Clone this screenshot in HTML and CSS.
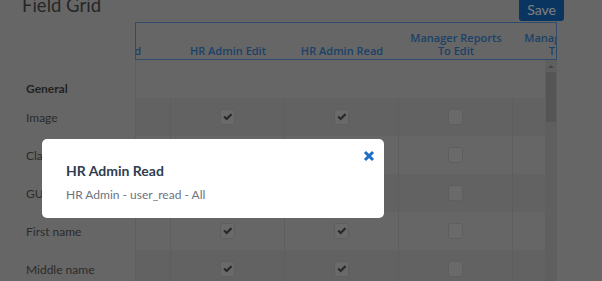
FILE: index.html
```html
<!DOCTYPE html>
<html>
<head>
<meta charset="utf-8">
<link rel="stylesheet" href="styles.css">
</head>
<body>
<div class="page">
  <div class="topbar">
    <h1 class="title">Field Grid</h1>
    <button class="save">Save</button>
  </div>
  <div class="grid">
    <div class="labels">
      <div class="label section">General</div>
      <div class="label">Image</div>
      <div class="label">Class</div>
      <div class="label">GUID</div>
      <div class="label">First name</div>
      <div class="label">Middle name</div>
    </div>
    <div class="pane">
      <div class="head">
        <div class="head-inner">
          <div class="hcell">User Read</div>
          <div class="hcell">HR Admin Edit</div>
          <div class="hcell">HR Admin Read</div>
          <div class="hcell">Manager Reports<br>To Edit</div>
          <div class="hcell">Manager Reports<br>To Read</div>
        </div>
      </div>
      <div class="body">
        <div class="rows">
          <div class="rows-inner">
            <div class="section-row"></div>
            <div class="row alt">
              <div class="cell"><span class="box"></span></div>
              <div class="cell"><span class="box"><svg viewBox="0 0 11 8"><path d="M0.4 4.3 L2.1 2.6 L4 4.5 L8.5 0 L10.2 1.7 L4 7.9 Z"/></svg></span></div>
              <div class="cell"><span class="box"><svg viewBox="0 0 11 8"><path d="M0.4 4.3 L2.1 2.6 L4 4.5 L8.5 0 L10.2 1.7 L4 7.9 Z"/></svg></span></div>
              <div class="cell"><span class="box"></span></div>
              <div class="cell"><span class="box"></span></div>
            </div>
            <div class="row">
              <div class="cell"><span class="box"></span></div>
              <div class="cell"><span class="box"><svg viewBox="0 0 11 8"><path d="M0.4 4.3 L2.1 2.6 L4 4.5 L8.5 0 L10.2 1.7 L4 7.9 Z"/></svg></span></div>
              <div class="cell"><span class="box"><svg viewBox="0 0 11 8"><path d="M0.4 4.3 L2.1 2.6 L4 4.5 L8.5 0 L10.2 1.7 L4 7.9 Z"/></svg></span></div>
              <div class="cell"><span class="box"></span></div>
              <div class="cell"><span class="box"></span></div>
            </div>
            <div class="row alt">
              <div class="cell"><span class="box"></span></div>
              <div class="cell"><span class="box"><svg viewBox="0 0 11 8"><path d="M0.4 4.3 L2.1 2.6 L4 4.5 L8.5 0 L10.2 1.7 L4 7.9 Z"/></svg></span></div>
              <div class="cell"><span class="box"><svg viewBox="0 0 11 8"><path d="M0.4 4.3 L2.1 2.6 L4 4.5 L8.5 0 L10.2 1.7 L4 7.9 Z"/></svg></span></div>
              <div class="cell"><span class="box"></span></div>
              <div class="cell"><span class="box"></span></div>
            </div>
            <div class="row">
              <div class="cell"><span class="box"></span></div>
              <div class="cell"><span class="box"><svg viewBox="0 0 11 8"><path d="M0.4 4.3 L2.1 2.6 L4 4.5 L8.5 0 L10.2 1.7 L4 7.9 Z"/></svg></span></div>
              <div class="cell"><span class="box"><svg viewBox="0 0 11 8"><path d="M0.4 4.3 L2.1 2.6 L4 4.5 L8.5 0 L10.2 1.7 L4 7.9 Z"/></svg></span></div>
              <div class="cell"><span class="box"></span></div>
              <div class="cell"><span class="box"></span></div>
            </div>
            <div class="row alt">
              <div class="cell"><span class="box"></span></div>
              <div class="cell"><span class="box"><svg viewBox="0 0 11 8"><path d="M0.4 4.3 L2.1 2.6 L4 4.5 L8.5 0 L10.2 1.7 L4 7.9 Z"/></svg></span></div>
              <div class="cell"><span class="box"><svg viewBox="0 0 11 8"><path d="M0.4 4.3 L2.1 2.6 L4 4.5 L8.5 0 L10.2 1.7 L4 7.9 Z"/></svg></span></div>
              <div class="cell"><span class="box"></span></div>
              <div class="cell"><span class="box"></span></div>
            </div>
          </div>
        </div>
        <div class="scrollbar">
          <div class="arrow"></div>
          <div class="thumb"></div>
        </div>
      </div>
    </div>
  </div>
</div>
<div class="overlay"></div>
<div class="modal">
  <button class="close" aria-label="Close"><svg viewBox="0 0 12 12"><path d="M2 2 L10 10 M10 2 L2 10"/></svg></button>
  <h2 class="modal-title">HR Admin Read</h2>
  <p class="modal-text">HR Admin - user_read - All</p>
</div>
</body>
</html>
```
FILE: styles.css
```css
* { box-sizing: border-box; }
html, body { margin: 0; padding: 0; }
body {
  width: 602px;
  height: 281px;
  overflow: hidden;
  background: #cccccc;
  font-family: "Lato", "Open Sans", sans-serif;
  position: relative;
}
.page { width: 602px; }
.topbar {
  height: 22px;
  display: flex;
  justify-content: space-between;
  align-items: flex-start;
}
.title {
  margin: -4px 0 0 22px;
  font-size: 18.5px;
  line-height: 18px;
  font-weight: 400;
  color: #4c4c4c;
}
.save {
  margin: -8px 38px 0 0;
  height: 29px;
  padding: 6px 8px 0;
  border: none;
  border-radius: 3px;
  background: #146ac0;
  color: #ffffff;
  font-family: inherit;
  font-size: 14px;
  font-weight: 400;
  line-height: 14px;
}
.grid { display: flex; }
.labels { width: 135px; flex: none; padding-top: 56px; }
.label {
  height: 38px;
  display: flex;
  align-items: center;
  padding-left: 26px;
  font-size: 12px;
  color: #575757;
}
.label.section {
  height: 20px;
  font-weight: 700;
  color: #444;
}
.pane { width: 422px; flex: none; }
.head {
  height: 38px;
  border: 1px solid #5f98dc;
  overflow: hidden;
}
.head-inner { display: flex; margin-left: -79px; height: 100%; }
.hcell {
  flex: none;
  width: 114px;
  display: flex;
  align-items: flex-end;
  justify-content: center;
  text-align: center;
  padding-bottom: 2px;
  font-family: "Open Sans", "Lato", sans-serif;
  font-size: 11px;
  line-height: 13px;
  font-weight: 600;
  color: #3a84d0;
  white-space: nowrap;
}
.body { display: flex; height: 221px; }
.rows {
  width: 410px;
  flex: none;
  overflow: hidden;
  border-left: 1px solid #bcbcbc;
}
.rows-inner { margin-left: -79px; width: 600px; }
.section-row { height: 38px; }
.row { display: flex; height: 38px; background: #cccccc; }
.row.alt { background: #c4c4c4; }
.cell {
  flex: none;
  width: 114px;
  border-right: 1px solid #bcbcbc;
  display: flex;
  align-items: center;
  justify-content: center;
}
.box {
  width: 15px;
  height: 16px;
  border: 1px solid #bdbdbd;
  border-radius: 3px;
  background: #d4d4d4;
  display: flex;
  align-items: center;
  justify-content: center;
}
.box svg { width: 10px; height: 8px; fill: #505050; }
.scrollbar {
  width: 12px;
  flex: none;
  background: #bfbfbf;
  display: flex;
  flex-direction: column;
  align-items: center;
  padding-top: 5px;
}
.arrow {
  width: 0;
  height: 0;
  border-left: 3px solid transparent;
  border-right: 3px solid transparent;
  border-bottom: 3px solid #8a8a8a;
}
.thumb {
  margin-top: 4px;
  width: 10px;
  height: 50px;
  background: #aaaaaa;
}
.overlay {
  position: absolute;
  inset: 0;
  background: rgba(0, 0, 0, 0.5);
}
.modal {
  position: absolute;
  left: 42px;
  top: 139px;
  width: 342px;
  height: 79px;
  background: #fff;
  border-radius: 5px;
  padding: 23px 24px 0;
}
.modal-title {
  margin: 0;
  font-size: 14px;
  line-height: 18px;
  font-weight: 700;
  color: #2e3d4f;
}
.modal-text {
  margin: 7px 0 0;
  font-size: 12px;
  line-height: 16px;
  color: #6b7480;
}
.close {
  position: absolute;
  top: 11px;
  right: 9px;
  width: 12px;
  height: 12px;
  padding: 0;
  border: none;
  background: none;
}
.close svg {
  display: block;
  width: 12px;
  height: 12px;
  stroke: #1b6fc4;
  stroke-width: 3;
  fill: none;
}
```
